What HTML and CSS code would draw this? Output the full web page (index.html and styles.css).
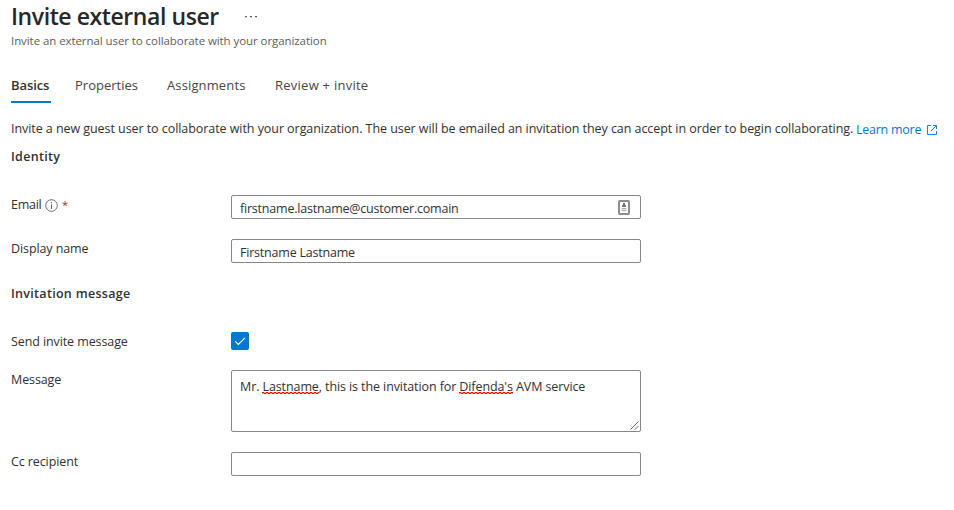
FILE: index.html
```html
<!DOCTYPE html>
<html lang="en">
<head>
<meta charset="utf-8">
<title>Invite external user</title>
<link rel="stylesheet" href="styles.css">
</head>
<body>
<header class="header">
  <div class="title-row"><h1 class="title">Invite external user</h1><svg class="more" width="12" height="4" viewBox="0 0 12 4"><path d="M0 1h2v1.3H0zM5 1h2v1.3H5zM10 1h2v1.3h-2z" fill="#605e5c"/></svg></div>
  <p class="subtitle">Invite an external user to collaborate with your organization</p>
</header>
<nav class="tabs">
  <a class="tab active">Basics</a>
  <a class="tab">Properties</a>
  <a class="tab assignments">Assignments</a>
  <a class="tab review">Review + invite</a>
</nav>
<main>
  <p class="intro"><span class="intro-text">Invite a new guest user to collaborate with your organization. The user will be emailed an invitation they can accept in order to begin collaborating.</span><a class="learn"><span>Learn more</span><svg width="10" height="10" viewBox="0 0 10 10" fill="none" stroke="#0078d4" stroke-width=".9"><path d="M4 .5H.5v9h9V6M6 .5h3.5V4M9.3.7L4 6"/></svg></a></p>
  <h2 class="section identity">Identity</h2>
  <div class="row email">
    <label class="label"><span class="label-email">Email</span><svg class="info" width="13" height="13" viewBox="0 0 13 13"><circle cx="6.5" cy="6.5" r="5.8" fill="none" stroke="#605e5c" stroke-width=".9"/><path d="M6 5.4h1V10H6zM6 3.2h1v1.1H6z" fill="#605e5c"/></svg><span class="required">*</span></label>
    <div class="field"><span>firstname.lastname@customer.comain</span><svg class="contact" width="12" height="15" viewBox="0 0 12 15"><rect x="1" y="1" width="10" height="13" rx=".7" fill="#fff" stroke="#8e8e8e" stroke-width="2"/><path d="M5 3h2v2h1v2H4V5h1z" fill="#777"/><path d="M3.5 8h5v1.2h-5zM3.5 10h5v1h-5z" fill="#aaa"/></svg></div>
  </div>
  <div class="row display">
    <label class="label">Display name</label>
    <div class="field"><span>Firstname Lastname</span></div>
  </div>
  <h2 class="section invitation">Invitation message</h2>
  <div class="row send">
    <label class="label">Send invite message</label>
    <div class="check"><svg width="18" height="18" viewBox="0 0 18 18"><path d="M4.2 9.3L7.3 12.5 14 5.9" fill="none" stroke="#fff" stroke-width="1.2"/></svg></div>
  </div>
  <div class="row message">
    <label class="label">Message</label>
    <div class="field area"><span>Mr. <span class="misspelled">Lastname</span>, this is the invitation for <span class="misspelled">Difenda's</span> AVM service</span><svg class="grip" width="9" height="9" viewBox="0 0 9 9"><path d="M.5 8.5l8-8M5 8.5L8.5 5" stroke="#555" stroke-width=".9"/></svg></div>
  </div>
  <div class="row cc">
    <label class="label">Cc recipient</label>
    <div class="field"></div>
  </div>
</main>
</body>
</html>
```
FILE: styles.css
```css
* { box-sizing: border-box; }
body {
  margin: 0;
  padding-left: 11px;
  background: #fff;
  color: #323130;
  font: 12.5px/18px "Open Sans", "Noto Sans", sans-serif;
  white-space: nowrap;
}
h1, h2, p { margin: 0; }
svg { display: block; flex: none; }
.header { height: 76px; }
.title-row { display: flex; height: 32px; }
.title { width: 234px; font-size: 23px; line-height: 32px; font-weight: 600; color: #292827; letter-spacing: -.42px; }
.more { margin-top: 15px; }
.subtitle { font-size: 11.5px; line-height: 18px; color: #605e5c; letter-spacing: -.075px; }
.tabs { display: flex; height: 27px; }
.tab { width: 92px; height: 27px; font-size: 13px; line-height: 19px; color: #484644; }
.active { width: 40px; margin-right: 24px; font-weight: 600; color: #323130; border-bottom: 2px solid #0078d4; letter-spacing: -.1px; }
.assignments { width: 108px; letter-spacing: .13px; }
.review { letter-spacing: .25px; }
.intro { display: flex; height: 18px; margin-top: 17px; }
.intro-text { width: 845px; letter-spacing: -.062px; }
.learn { display: flex; gap: 6px; color: #0078d4; padding-top: 1px; letter-spacing: -.25px; }
.learn svg { margin-top: 4px; }
.section { font-size: 12.5px; line-height: 18px; height: 18px; font-weight: 600; letter-spacing: .3px; }
.identity { margin-top: 10px; }
.invitation { margin-top: 22px; }
.row { display: grid; grid-template-columns: 220px 410px; }
.label { display: flex; height: 18px; padding-top: 1px; letter-spacing: -.1px; }
.label-email { width: 31px; letter-spacing: -.25px; }
.email { margin-top: 29px; }
.display { margin-top: 20px; }
.send { margin-top: 29px; }
.message { margin-top: 20px; }
.cc { margin-top: 20px; }
.info { margin: 3px 4px 0 3px; }
.required { color: #a4262c; font-size: 11px; }
.field {
  display: flex;
  justify-content: space-between;
  height: 24px;
  padding: 4px 10px 0 8px;
  border: 1px solid #8a8886;
  border-radius: 2px;
  letter-spacing: -.21px;
}
.area { height: 62px; padding: 7px 1px 1px 8px; letter-spacing: -.1px; }
.grip { align-self: flex-end; }
.check { width: 18px; height: 18px; border-radius: 2px; background: #0078d4; }
/* Spell-check squiggle: a 4px zigzag, two pixels tall */
.misspelled {
  background:
    repeating-linear-gradient(90deg, #f00 0 2px, #ff9c9c 2px 4px) 0 calc(100% - 2px) / 100% 1px no-repeat,
    repeating-linear-gradient(90deg, #ff9c9c 0 2px, #f00 2px 4px) 0 calc(100% - 1px) / 100% 1px no-repeat;
}
```
